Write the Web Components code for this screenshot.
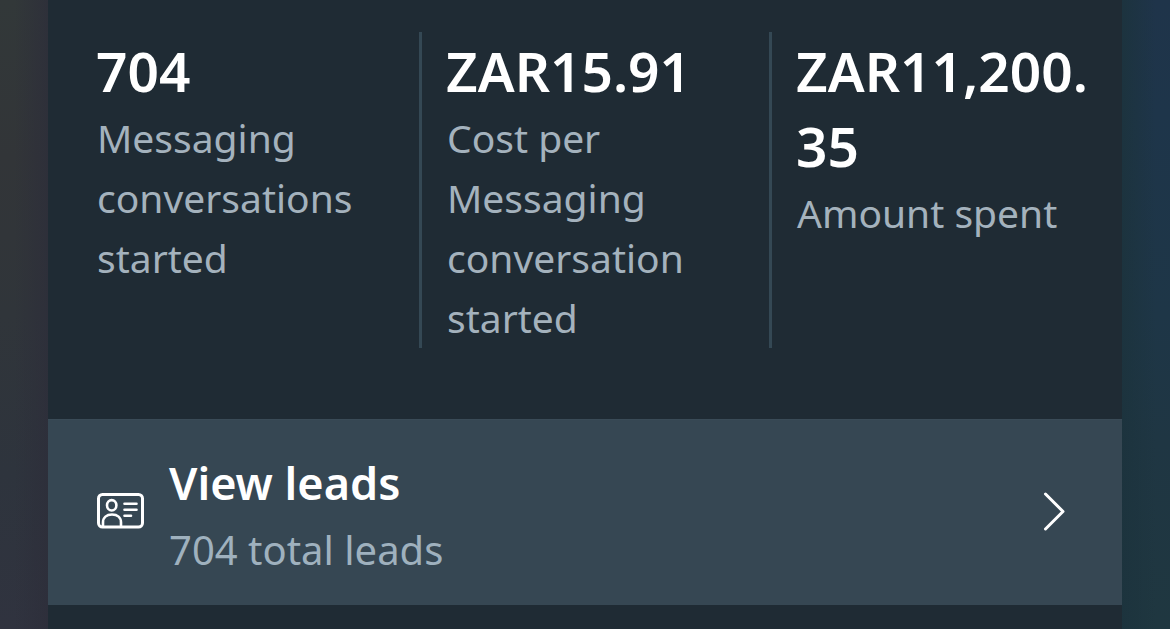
<!DOCTYPE html>
<html lang="en">
<head>
<meta charset="UTF-8">
<meta name="viewport" content="width=device-width, initial-scale=1.0">
<title>Ad performance</title>
<style>
  :root {
    --card-color: #1f2b34;
    --row-color: #364753;
    --divider-color: #344854;
    --text-light: #ffffff;
    --text-secondary: #a4b2bd;
  }
  body {
    margin: 0;
    min-height: 100vh;
    display: flex;
    font-family: "Noto Sans", "Open Sans", sans-serif;
    background:
      linear-gradient(to right, rgba(46,47,58,0) 30%, rgba(45,46,58,0.8)) left / 48px 100% no-repeat,
      linear-gradient(to left, rgba(28,51,60,0) 30%, rgba(28,51,61,0.9)) right / 48px 100% no-repeat,
      linear-gradient(to bottom, #323839, #323538 25%, #30353a 50%, #2e343d 75%, #30333f) left / 48px 100% no-repeat,
      linear-gradient(to bottom, #1f344a, #1e354a 18%, #1e3647 50%, #1f3643 70%, #1f3740) right / 48px 100% no-repeat,
      #1f2b34;
  }
  ad-summary {
    flex: 1;
    margin: 0 48px;
  }
</style>
</head>
<body>
<ad-summary>
  <stat-item slot="stats" value="704" label="Messaging conversations started"></stat-item>
  <stat-item slot="stats" value="ZAR15.91" label="Cost per Messaging conversation started"></stat-item>
  <stat-item slot="stats" value="ZAR11,200.35" label="Amount spent"></stat-item>
  <leads-row title-text="View leads">704 total leads</leads-row>
</ad-summary>

<script>
// Card with a row of stats on top and actions below
class AdSummary extends HTMLElement {
  constructor() {
    super();
    this.attachShadow({ mode: "open" });
  }

  connectedCallback() {
    this.shadowRoot.innerHTML = `
      <style>
        :host {
          display: block;
          background: var(--card-color);
        }
        .stats {
          display: grid;
          grid-template-columns: repeat(3, minmax(0, 1fr));
          padding: 32px 0 71px 24px;
        }
      </style>
      <section class="stats"><slot name="stats"></slot></section>
      <slot></slot>
    `;
  }
}

// One value with its label
class StatItem extends HTMLElement {
  constructor() {
    super();
    this.attachShadow({ mode: "open" });
  }

  connectedCallback() {
    const value = this.getAttribute("value") || "0";
    const label = this.getAttribute("label") || "";

    this.shadowRoot.innerHTML = `
      <style>
        :host {
          display: block;
          box-sizing: border-box;
          padding: 1px 24px 0;
          border-right: 3px solid var(--divider-color);
        }
        :host(:last-of-type) {
          border-right: 0;
        }
        .value {
          color: var(--text-light);
          font-size: 55px;
          font-weight: 600;
          line-height: 75px;
          overflow-wrap: anywhere;
        }
        .label {
          padding-left: 1px;
          color: var(--text-secondary);
          font-size: 39px;
          line-height: 60px;
        }
      </style>
      <div class="value">${value}</div>
      <div class="label">${label}</div>
    `;
  }
}

class LeadsRow extends HTMLElement {
  constructor() {
    super();
    this.attachShadow({ mode: "open" });
  }

  connectedCallback() {
    const title = this.getAttribute("title-text") || "";

    this.shadowRoot.innerHTML = `
      <style>
        :host {
          display: block;
        }
        button {
          display: flex;
          align-items: center;
          gap: 25px;
          width: 100%;
          margin: 0;
          padding: 25px 48px;
          border: 0;
          border-top: 1px solid #3a4b57;
          background: var(--row-color);
          font-family: inherit;
          text-align: left;
          cursor: pointer;
        }
        svg {
          flex: none;
          display: block;
          fill: none;
          stroke: var(--text-light);
          stroke-width: 3;
          stroke-linecap: round;
          stroke-linejoin: round;
        }
        .text {
          flex: 1;
        }
        .title {
          display: block;
          color: var(--text-light);
          font-size: 45px;
          font-weight: 600;
          line-height: 75px;
        }
        .subtitle {
          display: block;
          color: #9fb1be;
          font-size: 40px;
          line-height: 60px;
        }
      </style>
      <button type="button">
        <svg width="48" height="48" viewBox="0 0 48 48" aria-hidden="true">
          <rect x="2.500" y="5.500" width="44" height="32.500" rx="4"/>
          <ellipse cx="15.700" cy="16.300" rx="4.700" ry="5.200" stroke-width="2.600"/>
          <path d="M7 37.500v-4c0-5 3.500-8 9-8s9 3 9 8v4" stroke-width="2.600"/>
          <path d="M28.500 14.800h12M28.500 20.700h12M28.500 26.700h6.500" stroke-width="2.600"/>
        </svg>
        <span class="text">
          <span class="title">${title}</span>
          <span class="subtitle"><slot></slot></span>
        </span>
        <svg width="48" height="48" viewBox="0 0 48 48" aria-hidden="true">
          <path d="M19.500 5l17.500 17.500-17.500 17.500"/>
        </svg>
      </button>
    `;
  }
}

// Register Custom Elements
customElements.define("ad-summary", AdSummary);
customElements.define("stat-item", StatItem);
customElements.define("leads-row", LeadsRow);
</script>
</body>
</html>
